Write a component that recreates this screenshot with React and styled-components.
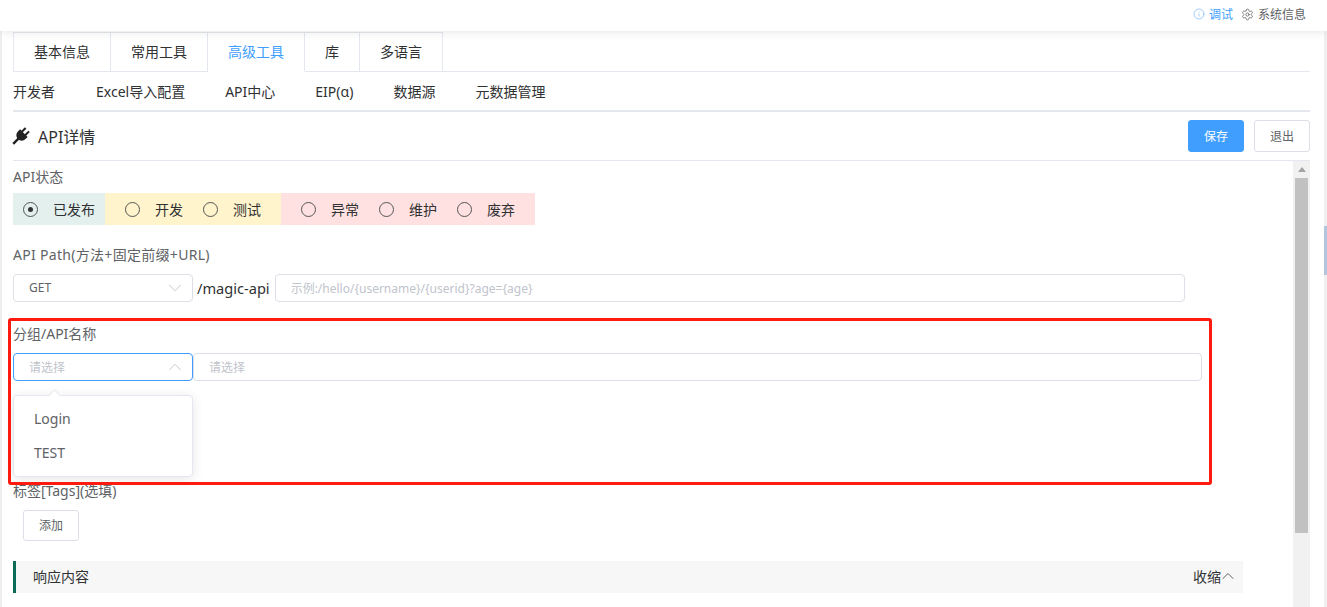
import React from "react";
import styled, { createGlobalStyle } from "styled-components";
import { ChevronDown, ChevronUp, Info, Settings } from "lucide-react";

const Global = createGlobalStyle`
  html, body { margin: 0; padding: 0; background: #fff; }
  body { font-family: "Noto Sans", "Noto Sans CJK SC", sans-serif; font-size: 14px; color: #303133; }
  * { box-sizing: border-box; }
`;

const Page = styled.div`
  position: relative;
  width: 1327px;
  height: 607px;
  overflow: hidden;
  display: flex;
  flex-direction: column;
`;
const Header = styled.header`
  position: relative;
  z-index: 2;
  flex: 0 0 31px;
  height: 31px;
  background: #fff;
  box-shadow: 0 1px 10px rgba(0, 0, 0, 0.1);
  display: flex;
  align-items: center;
  justify-content: flex-end;
  padding: 0 21px 3px 0;
  font-size: 12px;
  gap: 8px;
`;
const HeaderLink = styled.span`
  display: inline-flex;
  align-items: center;
  gap: 4px;
  color: ${(p) => (p.$active ? "#409eff" : "#606266")};
`;
const Body = styled.div`
  flex: 1;
  display: flex;
  min-height: 0;
`;
const LeftRail = styled.div`
  flex: 0 0 2px;
  background: #eeeeee;
`;
const Content = styled.main`
  flex: 0 0 1297px;
  margin: 1px 0 0 11px;
  display: flex;
  flex-direction: column;
  min-height: 0;
`;
const OuterBar = styled.div`
  flex: 0 0 3px;
  margin-left: 14px;
  background: #f0f0f0;
  padding-top: 195px;
`;
const OuterThumb = styled.div`
  height: 49px;
  background: #b4c6de;
`;
const TabBar = styled.div`
  display: flex;
  height: 40px;
  flex: 0 0 40px;
  border-bottom: 1px solid #e4e7ed;
`;
const Tab = styled.div`
  height: 40px;
  padding: 0 20px 2px;
  display: flex;
  align-items: center;
  border: 1px solid #e4e7ed;
  border-left-width: ${(p) => (p.$first ? "1px" : "0")};
  border-bottom-color: ${(p) => (p.$active ? "#fff" : "#e4e7ed")};
  color: ${(p) => (p.$active ? "#409eff" : "#303133")};
  font-size: 14px;
`;
const SubNav = styled.nav`
  flex: 0 0 40px;
  display: flex;
  align-items: center;
  gap: 40px;
  border-bottom: 2px solid #e4e7ed;
  color: #303133;
  span:first-child { margin-right: 1px; }
`;
const TitleRow = styled.div`
  flex: 0 0 49px;
  display: flex;
  align-items: center;
  justify-content: space-between;
  border-bottom: 1px solid #e4e7ed;
`;
const Title = styled.h2`
  margin: 0;
  display: flex;
  align-items: center;
  gap: 8px;
  font-size: 16px;
  font-weight: 400;
  color: #303133;
`;
const PlugSvg = styled.svg`
  width: 18px;
  height: 18px;
  margin-left: -1px;
  fill: #222;
`;
const PlugIcon = () => (
  <PlugSvg viewBox="0 0 18 18" aria-hidden="true">
    <g transform="rotate(45 9 9)">
      <rect x="5.6" y="0" width="2" height="5.5" />
      <rect x="10.4" y="0" width="2" height="5.5" />
      <path d="M3.6 5H14.4V8A5.4 5.4 0 0 1 9 13.4A5.4 5.4 0 0 1 3.6 8Z" />
      <rect x="7.8" y="12" width="2.4" height="8" />
    </g>
  </PlugSvg>
);
const Actions = styled.div`
  display: flex;
  gap: 10px;
`;
const Button = styled.button`
  width: 56px;
  height: 32px;
  padding: 0 0 1px;
  border-radius: 3px;
  font: inherit;
  font-size: 12px;
  border: 1px solid ${(p) => (p.$primary ? "#409eff" : "#dcdfe6")};
  background: ${(p) => (p.$primary ? "#409eff" : "#fff")};
  color: ${(p) => (p.$primary ? "#fff" : "#606266")};
`;
const Scroller = styled.div`
  flex: 1;
  display: flex;
  min-height: 0;
`;
const Form = styled.div`
  flex: 1;
  min-width: 0;
`;
const Label = styled.div`
  height: 22px;
  line-height: 22px;
  color: #606266;
  letter-spacing: ${(p) => p.$tracking || 0}px;
  margin-top: ${(p) => p.$top}px;
  margin-bottom: ${(p) => p.$bottom}px;
`;
const StatusStrip = styled.div`
  display: flex;
  height: 32px;
  color: #303133;
`;
const StatusGroup = styled.div`
  display: flex;
  align-items: center;
  gap: 20px;
  padding: 0 ${(p) => p.$pad}px 1px;
  background: ${(p) => p.$bg};
`;
const Radio = styled.label`
  display: flex;
  align-items: center;
  gap: 15px;
`;
const RadioCircle = styled.span`
  width: 15px;
  height: 15px;
  margin-top: 1px;
  border: 1px solid #555;
  border-radius: 50%;
  display: flex;
  align-items: center;
  justify-content: center;
  &::after {
    content: "";
    display: ${(p) => (p.$checked ? "block" : "none")};
    width: 5px;
    height: 5px;
    border-radius: 50%;
    background: #333;
  }
`;
const FieldRow = styled.div`
  display: flex;
  align-items: center;
  height: 28px;
  width: ${(p) => p.$width}px;
`;
const Select = styled.div`
  flex: 0 0 180px;
  height: 28px;
  border: 1px solid ${(p) => (p.$open ? "#409eff" : "#dcdfe6")};
  border-radius: 4px;
  padding: 0 6px 1px 15px;
  display: flex;
  align-items: center;
  justify-content: space-between;
  font-size: 12px;
  color: ${(p) => (p.$placeholder ? "#c0c4cc" : "#606266")};
  svg { color: #c0c4cc; }
`;
const Prefix = styled.span`
  margin: 0 5px 0 4px;
  color: #303133;
  font-size: 14.6px;
  white-space: nowrap;
`;
const Input = styled.div`
  flex: 1;
  height: 28px;
  border: 1px solid #dcdfe6;
  border-radius: 4px;
  padding: 0 15px 1px;
  display: flex;
  align-items: center;
  font-size: 12px;
  color: #c0c4cc;
`;
const AddButton = styled(Button)`
  display: block;
  height: 31px;
  padding-bottom: 2px;
  margin-left: 10px;
`;
const SectionBar = styled.div`
  margin-top: 20px;
  width: 1230px;
  height: 32px;
  background: #f7f7f7;
  border-left: 3px solid #0a6b57;
  padding: 0 5px 2px 17px;
  display: flex;
  align-items: center;
  justify-content: space-between;
  color: #303133;
`;
const Collapse = styled.span`
  display: flex;
  align-items: center;
  svg { color: #606266; margin-left: -3px; }
`;
const ScrollTrack = styled.div`
  flex: 0 0 17px;
  background: #f1f1f1;
  display: flex;
  flex-direction: column;
  align-items: center;
`;
const ScrollArrow = styled.div`
  margin: 6px 0 6px;
  width: 0;
  height: 0;
  border-left: 4px solid transparent;
  border-right: 4px solid transparent;
  border-bottom: 5px solid #a3a3a3;
`;
const ScrollThumb = styled.div`
  width: 13px;
  height: 355px;
  background: #c1c1c1;
`;
const RedFrame = styled.div`
  position: absolute;
  z-index: 3;
  left: 8px;
  top: 318px;
  width: 1204px;
  height: 167px;
  border: 3px solid #ff1a10;
  border-radius: 3px;
  pointer-events: none;
`;
const Dropdown = styled.div`
  position: absolute;
  z-index: 2;
  left: 13px;
  top: 395px;
  width: 180px;
  height: 82px;
  background: #fff;
  border: 1px solid #e4e7ed;
  border-radius: 4px;
  box-shadow: 0 2px 12px rgba(0, 0, 0, 0.1);
  padding: 6px 0;
  &::before {
    content: "";
    position: absolute;
    left: 36px;
    top: -5px;
    width: 8px;
    height: 8px;
    background: #fff;
    border-left: 1px solid #e4e7ed;
    border-top: 1px solid #e4e7ed;
    transform: rotate(45deg);
  }
`;
const Option = styled.div`
  height: 34px;
  line-height: 33px;
  padding: 0 20px;
  color: #606266;
  font-size: 14px;
`;

export default function App() {
  return (
    <Page>
      <Global />
      <Header>
        <HeaderLink $active><Info size={12} strokeWidth={1} />调试</HeaderLink>
        <HeaderLink><Settings size={13} strokeWidth={1.5} />系统信息</HeaderLink>
      </Header>
      <Body>
        <LeftRail />
        <Content>
          <TabBar>
            <Tab $first>基本信息</Tab>
            <Tab>常用工具</Tab>
            <Tab $active>高级工具</Tab>
            <Tab>库</Tab>
            <Tab>多语言</Tab>
          </TabBar>
          <SubNav>
            <span>开发者</span>
            <span>Excel导入配置</span>
            <span>API中心</span>
            <span>EIP(α)</span>
            <span>数据源</span>
            <span>元数据管理</span>
          </SubNav>
          <TitleRow>
            <Title><PlugIcon />API详情</Title>
            <Actions>
              <Button $primary>保存</Button>
              <Button>退出</Button>
            </Actions>
          </TitleRow>
          <Scroller>
            <Form>
              <Label $top={5} $bottom={5}>API状态</Label>
              <StatusStrip>
                <StatusGroup $bg="#e3f0ee" $pad={10}>
                  <Radio><RadioCircle $checked />已发布</Radio>
                </StatusGroup>
                <StatusGroup $bg="#fff4cc" $pad={20}>
                  <Radio><RadioCircle />开发</Radio>
                  <Radio><RadioCircle />测试</Radio>
                </StatusGroup>
                <StatusGroup $bg="#ffe1e1" $pad={20}>
                  <Radio><RadioCircle />异常</Radio>
                  <Radio><RadioCircle />维护</Radio>
                  <Radio><RadioCircle />废弃</Radio>
                </StatusGroup>
              </StatusStrip>
              <Label $top={19} $bottom={8} $tracking={0.3}>API Path(方法+固定前缀+URL)</Label>
              <FieldRow $width={1172}>
                <Select>GET<ChevronDown size={22} strokeWidth={1} /></Select>
                <Prefix>/magic-api</Prefix>
                <Input>示例:/hello/{"{username}"}/{"{userid}"}?age={"{age}"}</Input>
              </FieldRow>
              <Label $top={21} $bottom={8}>分组/API名称</Label>
              <FieldRow $width={1189}>
                <Select $open $placeholder>请选择<ChevronUp size={22} strokeWidth={1} /></Select>
                <Input>请选择</Input>
              </FieldRow>
              <Label $top={99} $bottom={8}>标签[Tags](选填)</Label>
              <AddButton>添加</AddButton>
              <SectionBar>
                <span>响应内容</span>
                <Collapse>收缩<ChevronUp size={20} strokeWidth={1.2} /></Collapse>
              </SectionBar>
            </Form>
            <ScrollTrack>
              <ScrollArrow />
              <ScrollThumb />
            </ScrollTrack>
          </Scroller>
        </Content>
        <OuterBar><OuterThumb /></OuterBar>
      </Body>
      <Dropdown>
        <Option>Login</Option>
        <Option>TEST</Option>
      </Dropdown>
      <RedFrame />
    </Page>
  );
}
